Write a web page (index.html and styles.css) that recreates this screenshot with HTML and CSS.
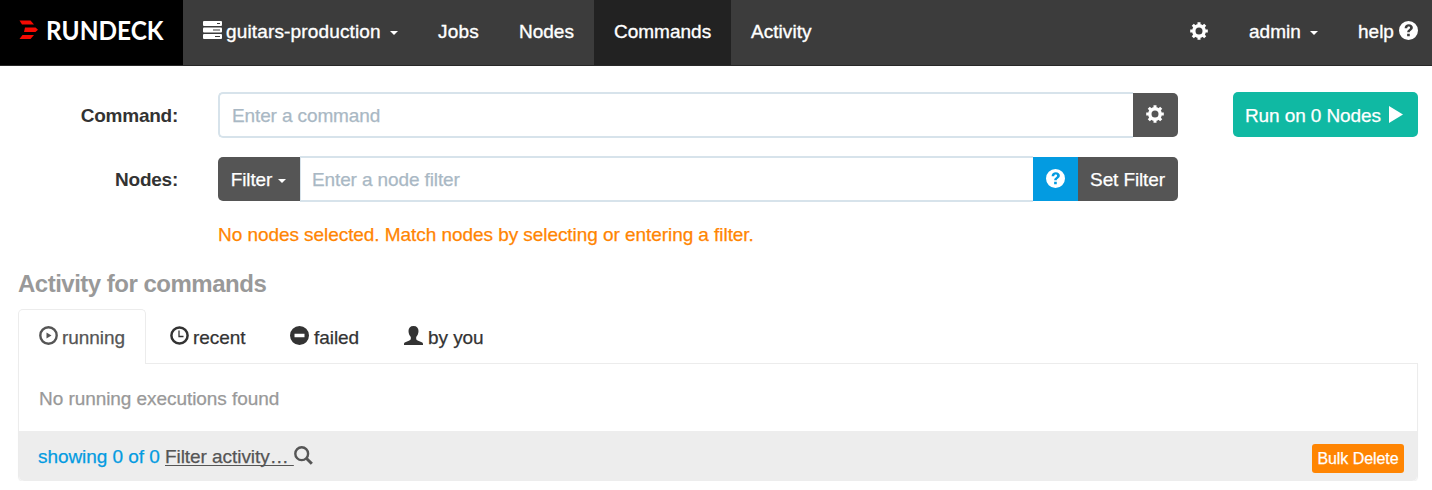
FILE: index.html
```html
<!DOCTYPE html>
<html lang="en">
<head>
<meta charset="utf-8">
<title>Rundeck - Commands</title>
<link rel="stylesheet" href="styles.css">
</head>
<body>
<svg class="defs" aria-hidden="true">
  <symbol id="cog" viewBox="0 0 18 18"><g fill="none" stroke="currentColor"><circle cx="9" cy="9" r="5.200" stroke-width="3.400"/><path stroke-width="3" d="M9 .2v3M9 14.800v3M.2 9h3M14.800 9h3M2.800 2.800l2.100 2.100M13.100 13.100l2.100 2.100M2.800 15.200l2.100-2.100M13.100 4.900l2.100-2.100"/></g></symbol>
  <symbol id="question" viewBox="0 0 18 18"><path fill-rule="evenodd" d="M9 0a9 9 0 1 1 0 18A9 9 0 0 1 9 0zM5.300 6.800h2.500c0-1 .5-1.500 1.400-1.500.8 0 1.300.4 1.300 1.100 0 .6-.3.9-1 1.400-1.200.8-1.700 1.500-1.700 2.900h2.400c0-.8.3-1 1.200-1.700 1.100-.8 1.700-1.600 1.700-2.800C13.100 4.300 11.500 3 9.300 3 6.900 3 5.400 4.400 5.300 6.800zM7.700 12v2.500h2.500V12z"/></symbol>
</svg>

<nav class="navbar">
  <a class="brand">
    <svg width="183" height="65" viewBox="0 0 183 65">
      <path fill="#f60a02" d="M19.500 20.500h11l3.500 4H22zM25 27.500h10.500l2.500 2.300-2.500 2.200H24zM22.500 35H34l-3.500 4h-11z"/>
      <text class="wordmark" x="46" y="40.300" textLength="117.500" lengthAdjust="spacingAndGlyphs">RUNDECK</text>
    </svg>
  </a>
  <a class="nav-item project">
    <svg class="server" width="19" height="18" viewBox="0 0 19 18"><g fill="#fff"><rect width="19" height="5" rx="1"/><rect y="6.500" width="19" height="5" rx="1"/><rect y="13" width="19" height="5" rx="1"/></g><path stroke="#3c3c3c" d="M14 2.500h3M10 9h7M12 15.500h5"/></svg>
    <span class="project-name">guitars-production</span><i class="caret"></i>
  </a>
  <a class="nav-item jobs">Jobs</a>
  <a class="nav-item nodes">Nodes</a>
  <a class="nav-item active">Commands</a>
  <a class="nav-item activity">Activity</a>
  <div class="nav-right">
    <svg class="nav-cog" width="18" height="18"><use href="#cog"/></svg>
    <a class="user"><span>admin</span><i class="caret"></i></a>
    <a class="help"><span>help</span><svg width="19" height="19"><use href="#question"/></svg></a>
  </div>
</nav>

<main>
  <form class="command-form">
    <div class="row">
      <label>Command:</label>
      <div class="group">
        <div class="input first">Enter a command</div>
        <div class="btn gear last"><svg width="18" height="18"><use href="#cog"/></svg></div>
      </div>
      <div class="run"><span>Run on 0 Nodes</span><svg width="14" height="17" viewBox="0 0 14 17"><path d="M0 0l14 8.500L0 17z"/></svg></div>
    </div>
    <div class="row">
      <label>Nodes:</label>
      <div class="group">
        <div class="btn filter">Filter<i class="caret"></i></div>
        <div class="input">Enter a node filter</div>
        <div class="btn info"><svg width="19" height="19"><use href="#question"/></svg></div>
        <div class="btn set last">Set Filter</div>
      </div>
    </div>
    <p class="warning">No nodes selected. Match nodes by selecting or entering a filter.</p>
  </form>

  <h4>Activity for commands</h4>
  <div class="tabs">
    <a class="tab current"><svg width="19" height="19" viewBox="0 0 19 19"><circle cx="9.500" cy="9.500" r="8.200" fill="none" stroke="currentColor" stroke-width="2.400"/><path d="M7.500 6.500l5 3-5 3z"/></svg>running</a>
    <a class="tab recent"><svg width="19" height="19" viewBox="0 0 19 19"><circle cx="9.500" cy="9.500" r="8.100" fill="none" stroke="currentColor" stroke-width="2.500"/><path fill="none" stroke="currentColor" stroke-width="1.300" d="M9 4.500v6h4.500"/></svg>recent</a>
    <a class="tab failed"><svg width="19" height="19" viewBox="0 0 19 19"><path fill-rule="evenodd" d="M9.500 0a9.500 9.500 0 1 1 0 19 9.500 9.500 0 0 1 0-19zM4.500 7.700v3.600h10V7.700z"/></svg>failed</a>
    <a class="tab mine"><svg width="19" height="19" viewBox="0 0 19 19"><path d="M9.500 0c3.400 0 5 2 5 5.100 0 2.600-1 4.600-2.300 5.900v1.800c0 .8.5 1.200 1.400 1.600l4.100 1.800c.9.400 1.300.9 1.300 1.700v1.100H0v-1.100c0-.8.400-1.300 1.300-1.700l4.100-1.800c.9-.4 1.400-.8 1.400-1.600V11C5.500 9.700 4.500 7.700 4.500 5.100 4.500 2 6.100 0 9.500 0z"/></svg>by you</a>
  </div>
  <section class="panel">
    <div class="empty">No running executions found</div>
    <footer>
      <span class="count">showing 0 of 0</span>
      <a class="filter-link">Filter activity…&nbsp;</a>
      <svg class="search" width="19" height="19" viewBox="0 0 19 19"><circle cx="7.700" cy="7.700" r="6.400" fill="none" stroke="currentColor" stroke-width="2.400"/><path stroke="currentColor" stroke-width="3" d="M12.300 12.300l5.500 5.500"/></svg>
      <span class="bulk">Bulk Delete</span>
    </footer>
  </section>
</main>
</body>
</html>
```
FILE: styles.css
```css
* { box-sizing: border-box; }
body {
  margin: 0;
  background: #fff;
  color: #333;
  font: 19px/26px "Liberation Sans", Arial, sans-serif;
  letter-spacing: -0.06px;
  white-space: nowrap;
  -webkit-text-stroke: 0.25px currentColor;
}
svg { display: block; flex: none; fill: currentColor; }
.defs { display: none; }
.caret {
  flex: none;
  width: 8px;
  border: 4px solid transparent;
  border-top-color: currentColor;
  border-bottom: 0;
}

.navbar {
  display: flex;
  height: 66px;
  background: #3c3c3c;
  border-bottom: 1px solid #282828;
  color: #fff;
  letter-spacing: 0;
  -webkit-text-stroke: 0.35px currentColor;
}
.brand { width: 183px; background: #000; }
.wordmark {
  font: bold 27px Lato, sans-serif;
  letter-spacing: 0;
  fill: #fff;
  -webkit-text-stroke: 0;
}
.nav-item { display: flex; align-items: center; padding: 0 20px 1px; }
.project { width: 235px; }
.project-name { letter-spacing: 0.15px; }
.server { margin: 0 4px 4px 0; }
.project .caret { margin: 2px 0 0 auto; }
.jobs { width: 81px; letter-spacing: 0.2px; }
.nodes { width: 95px; }
.active { width: 137px; background: #222; }
.activity { letter-spacing: 0.05px; }
.nav-right {
  display: flex;
  align-items: center;
  margin-left: auto;
  padding: 0 14px 1px 0;
}
.nav-cog { margin: 0 41px 3px 0; }
.user { display: flex; align-items: center; width: 69px; margin-right: 40px; }
.user .caret { margin: 2px 0 0 auto; }
.help { display: flex; align-items: center; justify-content: space-between; width: 60px; }
.help svg { margin-bottom: 3px; }

main { padding: 26px 14px 0 18px; }
.row { display: flex; height: 46px; margin-bottom: 18px; }
label {
  width: 160px;
  margin-right: 40px;
  font-weight: bold;
  line-height: 47px;
  letter-spacing: -0.25px;
  text-align: right;
  -webkit-text-stroke: 0;
}
.group { display: flex; align-items: center; width: 960px; letter-spacing: -0.12px; }
.input {
  flex: 1;
  height: 46px;
  padding-left: 12px;
  border: 2px solid #d7e3eb;
  border-right: 0;
  border-left-width: 1px;
  color: #a9b8c4;
  line-height: 43px;
}
.input:not(.first) { padding-left: 11px; }
.input.first { border-left-width: 2px; border-radius: 5px 0 0 5px; }
.btn {
  display: flex;
  align-items: center;
  justify-content: center;
  height: 44px;
  padding-top: 1px;
  background: #555;
  color: #fff;
}
.btn.last { border-radius: 0 5px 5px 0; }
.gear, .info { width: 45px; padding: 0 1px 2px 0; }
.filter { width: 82px; padding-right: 1px; border-radius: 5px 0 0 5px; }
.filter .caret { margin: 3px 0 0 6px; }
.info { background: #039be1; }
.set { width: 100px; padding-right: 1px; }
.run {
  display: flex;
  align-items: center;
  justify-content: space-between;
  width: 185px;
  height: 45px;
  margin-left: auto;
  padding: 2px 15px 0 12px;
  border-radius: 5px;
  background: #10b9a3;
  color: #fff;
  letter-spacing: -0.1px;
}
.run svg { margin-bottom: 2px; }
.warning { height: 26px; margin: 0 0 0 200px; padding-top: 2px; color: #ff8502; }
h4 {
  height: 30px;
  margin: 20px 0 13px;
  color: #999;
  font-size: 24px;
  line-height: 36px;
  letter-spacing: -0.5px;
  -webkit-text-stroke: 0;
}
.tabs { display: flex; height: 54px; }
.tab { display: flex; align-items: center; padding-top: 3px; color: #333; }
.tab svg { margin: -4px 5px 0 0; }
.current {
  position: relative;
  z-index: 1;
  width: 128px;
  height: 55px;
  margin-right: 24px;
  padding: 1px 0 0 20px;
  border: 1px solid #ececec;
  border-bottom: 0;
  border-radius: 5px 5px 0 0;
  background: #fff;
  color: #555;
}
.current svg { margin-right: 4px; }
.recent { width: 120px; }
.recent svg { margin-right: 4px; }
.failed { width: 114px; }
.panel {
  height: 118px;
  border: 1px solid #ececec;
  border-bottom: 0;
  border-radius: 0 0 5px 5px;
  box-shadow: 0 1px 1px rgba(0, 0, 0, 0.06);
}
.empty { height: 67px; padding-left: 20px; color: #999; line-height: 70px; }
footer {
  display: flex;
  align-items: center;
  height: 50px;
  padding: 1px 13px 0 19px;
  border-radius: 0 0 5px 5px;
  background: #ededed;
  color: #555;
}
.count { width: 127px; color: #039be1; }
.filter-link {
  text-decoration: underline;
  text-decoration-skip-ink: none;
  text-decoration-thickness: 1px;
  text-underline-offset: 2px;
}
.search { margin-top: -3px; }
.bulk {
  width: 92px;
  height: 29px;
  margin: 4px 0 0 auto;
  border-radius: 3px;
  background: #ff8502;
  color: #fff;
  font-size: 16px;
  line-height: 29px;
  text-align: center;
}
```
